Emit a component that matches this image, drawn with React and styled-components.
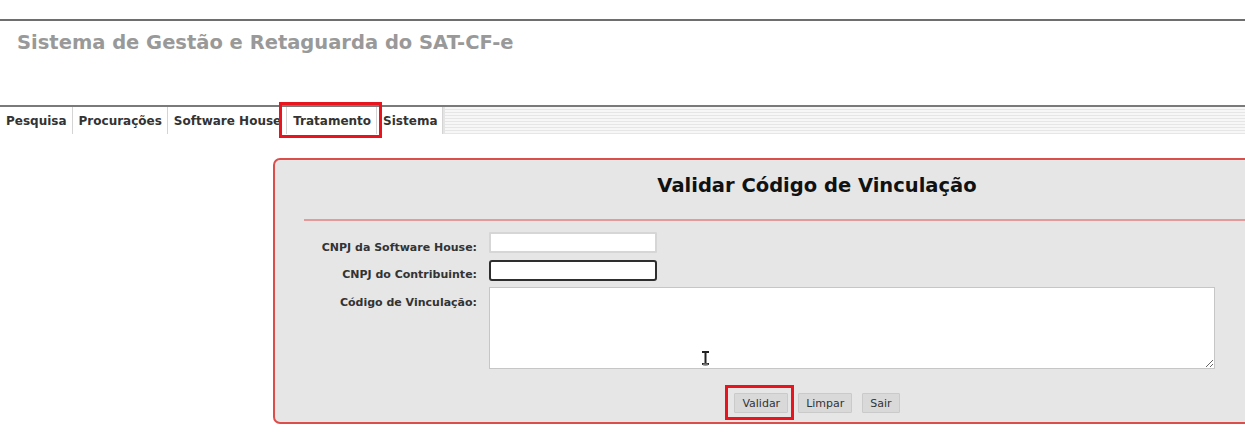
import React from "react";
import styled, { createGlobalStyle, css } from "styled-components";

const GlobalStyle = createGlobalStyle`
  html, body {
    margin: 0;
    padding: 0;
    background: #fff;
    overflow: hidden;
  }
  body {
    font-family: "DejaVu Sans", Verdana, sans-serif;
    color: #333;
  }
`;

const TABS = ["Pesquisa", "Procurações", "Software House", "Tratamento", "Sistema"];

// red attention frame drawn around a highlighted element
const marked = css`
  position: relative;
  &::after {
    content: "";
    position: absolute;
    border: 3px solid #e8141e;
    pointer-events: none;
  }
`;

const Page = styled.div`
  width: 1245px;
  height: 435px;
  overflow: hidden;
`;

const TopRule = styled.div`
  margin-top: 19px;
  height: 2px;
  background: #6e6e6e;
`;

const Header = styled.header`
  height: 84px;
  padding: 11px 0 0 17px;
  box-sizing: border-box;
`;

const Title = styled.h1`
  margin: 0;
  font-size: 19.5px;
  line-height: 22px;
  font-weight: bold;
  color: #999;
`;

const TabBar = styled.nav`
  display: flex;
  height: 29px;
  border-top: 2px solid #7a7a7a;
  box-sizing: border-box;
`;

const Tab = styled.div`
  display: flex;
  align-items: center;
  padding: 0 5px 0 6px;
  font-size: 12px;
  font-weight: bold;
  color: #333;
  background: #fff;
  border-right: 1px solid #d4d4d4;
  ${(p) =>
    p.$marked &&
    css`
      ${marked}
      &::after {
        top: -5px;
        left: -8px;
        right: -6px;
        bottom: -4px;
      }
    `}
`;

const TabFiller = styled.div`
  flex: 1;
  border-left: 2px solid #e4e4e4;
  background: repeating-linear-gradient(
    to bottom,
    #f7f7f7 0,
    #f7f7f7 2px,
    #e6e6e6 2px,
    #e6e6e6 3px
  );
`;

const Main = styled.main`
  padding: 24px 0 0 273px;
`;

const Panel = styled.section`
  width: 1088px;
  height: 266px;
  box-sizing: border-box;
  border: 2px solid #dc4e4b;
  border-radius: 7px;
  background: #e6e6e6;
`;

const Heading = styled.h2`
  margin: 0;
  padding-top: 14px;
  height: 59px;
  box-sizing: border-box;
  text-align: center;
  font-size: 19.5px;
  line-height: 24px;
  font-weight: bold;
  color: #111;
`;

const Divider = styled.div`
  margin-left: 29px;
  height: 2px;
  background: #e49a9a;
`;

const Form = styled.div`
  display: grid;
  grid-template-columns: 202px auto;
  column-gap: 12px;
  row-gap: 6px;
  margin-top: 11px;
  justify-items: start;
`;

const Label = styled.label`
  justify-self: end;
  align-self: start;
  padding-top: ${(p) => p.$offset || 8}px;
  font-size: 11px;
  font-weight: bold;
  color: #333;
`;

const Input = styled.input`
  width: 168px;
  height: 21px;
  box-sizing: border-box;
  background: #fff;
  border: ${(p) => (p.$focused ? "2px solid #2e2e2e" : "2px solid #d6d6d6")};
  border-radius: ${(p) => (p.$focused ? "3px" : "1px")};
  outline: none;
  padding: 0 3px;
  font: 11px "DejaVu Sans", sans-serif;
`;

const AreaWrap = styled.div`
  position: relative;
`;

const Area = styled.textarea`
  display: block;
  width: 726px;
  height: 82px;
  box-sizing: border-box;
  border: 1px solid #c6c6c6;
  background: #fff;
  outline: none;
  resize: both;
  font: 11px "DejaVu Sans", sans-serif;
`;

const Cursor = styled.svg`
  position: absolute;
  left: 212px;
  top: 64px;
`;

const Actions = styled.div`
  display: flex;
  justify-content: center;
  gap: 10px;
  margin-top: 24px;
`;

const Button = styled.button`
  height: 20px;
  padding: 0 7px;
  font: 11px "DejaVu Sans", sans-serif;
  color: #333;
  background: #d9d9d9;
  border: 1px solid #cacaca;
  border-radius: 1px;
  ${(p) =>
    p.$marked &&
    css`
      ${marked}
      &::after {
        top: -9px;
        left: -10px;
        right: -7px;
        bottom: -8px;
      }
    `}
`;

export default function App() {
  return (
    <Page>
      <GlobalStyle />
      <TopRule />
      <Header>
        <Title>Sistema de Gestão e Retaguarda do SAT-CF-e</Title>
      </Header>
      <TabBar>
        {TABS.map((t) => (
          <Tab key={t} $marked={t === "Tratamento"}>
            {t}
          </Tab>
        ))}
        <TabFiller />
      </TabBar>
      <Main>
        <Panel>
          <Heading>Validar Código de Vinculação</Heading>
          <Divider />
          <Form>
            <Label $offset={9}>CNPJ da Software House:</Label>
            <Input readOnly />
            <Label $offset={8}>CNPJ do Contribuinte:</Label>
            <Input $focused />
            <Label $offset={9}>Código de Vinculação:</Label>
            <AreaWrap>
              <Area />
              <Cursor width="9" height="15" viewBox="0 0 9 15">
                <path
                  d="M1 1h7M4.5 1v12M1 13h7"
                  stroke="#222"
                  strokeWidth="2"
                  fill="none"
                />
                <ellipse cx="4.5" cy="13.5" rx="3" ry="1.3" fill="#777" />
              </Cursor>
            </AreaWrap>
          </Form>
          <Actions>
            <Button $marked>Validar</Button>
            <Button>Limpar</Button>
            <Button>Sair</Button>
          </Actions>
        </Panel>
      </Main>
    </Page>
  );
}
